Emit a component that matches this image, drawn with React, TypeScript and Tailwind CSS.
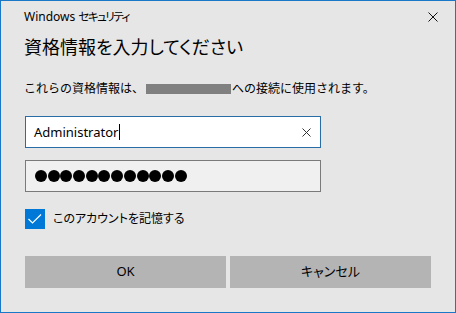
import React from "react";

const FONT = '"Noto Sans", "Noto Sans CJK JP", sans-serif';

function CrossIcon({ size, color }: { size: number; color: string }) {
  return (
    <svg width={size} height={size} viewBox={`0 0 ${size} ${size}`} fill="none">
      <path d={`M0.5 0.5 L${size - 0.5} ${size - 0.5} M${size - 0.5} 0.5 L0.5 ${size - 0.5}`} stroke={color} strokeWidth="1" />
    </svg>
  );
}

export default function App() {
  const dots = Array.from({ length: 12 });

  return (
    <div
      className="w-[456px] h-[313px] bg-[#e6e6e6] border border-[#1b78c8] flex flex-col text-black overflow-hidden [font-feature-settings:'palt']"
      style={{ fontFamily: FONT }}
    >
      {/* Title bar */}
      <div className="h-[32px] flex items-center justify-between pl-[23px] pr-[17px]">
        <span className="text-[12px] leading-none">
          Windows <span className="text-[11.5px] tracking-[-1.5px]">セキュリティ</span>
        </span>
        <CrossIcon size={10} color="#111" />
      </div>

      <div className="flex flex-col pl-[24px]">
        <h1 className="mt-[2px] -ml-px text-[18px] leading-[24px] font-normal">資格情報を入力してください</h1>

        <p className="mt-[22px] -ml-px text-[12px] leading-[16px] flex items-center [font-feature-settings:normal]">
          これらの資格情報は、
          <span className="inline-block w-[85px] h-[10px] bg-[#808080] ml-[2px] mr-px" />
          への接続に使用されます。
        </p>

        {/* Username */}
        <div className="mt-[19px] w-[296px] h-[32px] bg-white border border-[#2a6ca6] flex items-center pl-[8px] pr-[9px]">
          <span className="text-[13px] leading-none">Administrator</span>
          <span className="w-px h-[16px] bg-black ml-px" />
          <span className="flex-1" />
          <CrossIcon size={9} color="#333" />
        </div>

        {/* Password */}
        <div className="mt-[12px] w-[296px] h-[32px] bg-[#f0f0f0] border border-[#7a7a7a] flex items-center pl-[9px] gap-[0.7px]">
          {dots.map((_, i) => (
            <span key={i} className="w-[12px] h-[12px] rounded-full bg-black" />
          ))}
        </div>

        {/* Remember */}
        <label className="mt-[17px] flex items-center gap-[8px]">
          <span className="w-[20px] h-[20px] bg-[#0078d7] flex items-center justify-center">
            <svg width="20" height="20" viewBox="0 0 20 20" fill="none">
              <path d="M3.5 10 L7.5 14 L16 5.5" stroke="#fff" strokeWidth="1.2" />
            </svg>
          </span>
          <span className="text-[12px] leading-none">このアカウントを記憶する</span>
        </label>

        {/* Buttons */}
        <div className="mt-[27px] flex gap-[4px]">
          <button className="w-[201px] h-[32px] bg-[#b4b4b4] text-[13px]">OK</button>
          <button className="w-[201px] h-[32px] bg-[#b4b4b4] text-[13px]">キャンセル</button>
        </div>
      </div>
    </div>
  );
}
